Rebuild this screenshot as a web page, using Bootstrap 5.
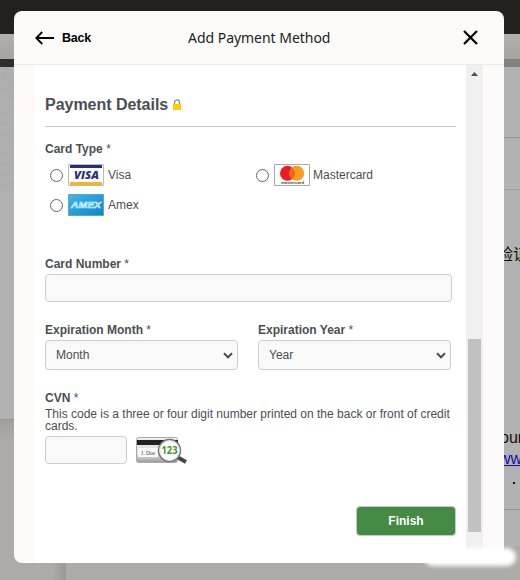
<!DOCTYPE html>
<html lang="en">
<head>
<meta charset="utf-8">
<meta name="viewport" content="width=device-width, initial-scale=1">
<title>Add Payment Method</title>
<link href="https://cdn.jsdelivr.net/npm/bootstrap@5.3.0/dist/css/bootstrap.min.css" rel="stylesheet">
<style>
body{width:520px;height:580px;overflow:hidden;background:#acaba9;font:12px/14px "Liberation Sans",Arial,sans-serif;color:#4a4f53}
.page-top{height:34px;background:#22211d}
.page-sub{height:25px;background:linear-gradient(#b1b0af,#a5a4a2)}
.page-strip{height:8px;background:linear-gradient(90deg,#302e2a 0 30px,#85807b 490px)}
.page-left{width:66px;height:513px;background:linear-gradient(90deg,#acaba9 52px,#9b9a98)}
.left-art{height:124px;width:14px;background:repeating-radial-gradient(circle at -12px 0,#afafaf 0 6px,#acacac 9px 10px)}
.left-card{height:229px;width:14px;background:#b1b1b1;border-bottom:1px solid #989796}
.left-shade{height:18px;width:14px;background:linear-gradient(#a09f9d,#acaba9)}
.page-right{width:16px;height:479px;background:#b2b2b2;overflow:hidden;color:#111;font:16px/21px "Liberation Sans","Noto Sans CJK SC",sans-serif;white-space:nowrap}
.r1{height:71px;border-bottom:1px solid #929292}
.r2{height:52px;border-bottom:1px solid #a0a0a0}
.r3{height:237px;padding-top:54px}
.r3 span{margin-left:-7px}
.r4{height:83px;border-bottom:1px solid #929292}
.r4 span{display:block;margin-left:-4px}
.r4 .site{color:#1a0dab;text-decoration:underline;margin-left:-5px}
.r4 .dot{margin:13px 0 0 9px;width:2px;height:2px;background:#111}
.pay-dialog{left:14px;top:11px;width:490px;height:552px;border-radius:8px;background:#fcfbf9;overflow:hidden}
.pay-head{height:54px;border-bottom:1px solid #ebeaea;padding:0 26px 0 21px;color:#000}
.back-text{font-weight:bold;font-size:12.5px;margin-left:7px;width:126px;letter-spacing:-.25px}
.head-title{font:14px/20px "Noto Sans",sans-serif;color:#222;width:144px;white-space:nowrap;letter-spacing:-.03px}
.pay-body{height:498px;padding:0 21px}
.pay-form{width:431px;background:#fff;padding:30px 10px 0}
.sec-title{font-size:16px;line-height:20px;font-weight:bold;height:32px;margin:0;border-bottom:1px solid #ccc;width:411px;color:#4a4f53;letter-spacing:-.03px}
.lab{font-weight:bold;height:14px;line-height:14px;display:block}
.lab i{font-weight:normal;font-style:normal}
.kind{width:206px;height:30px;padding-left:5px}
.kind input{width:13px;height:13px;margin:1px 5px 0 0;appearance:none;border:1px solid #666;border-radius:50%;background:#fff}
.kind svg{margin-right:4px;flex:none}
.kind input:checked{background:#666}
.form-control.fld,.form-select.sel{border:1px solid #ccc;border-radius:4px;background-color:#f9f9f9;font-size:12px;line-height:14px;color:#4a4f53}
.form-control.fld{height:28px;padding:4px 8px}
.form-select.sel{width:193px;height:30px;padding:0 25px 0 10px;background-image:url("data:image/svg+xml,%3Csvg xmlns='http://www.w3.org/2000/svg' viewBox='0 0 10 7'%3E%3Cpath d='M1 1.3 5 5.3 9 1.3' fill='none' stroke='%234a4f53' stroke-width='2'/%3E%3C/svg%3E");background-size:10px 7px;background-position:right 4px center}
.hint{line-height:12px;height:24px;margin:3px 0 4px;letter-spacing:-.002px;white-space:nowrap}
.btn.finish{width:100px;height:30px;padding:0;border:1px solid #c3cdc2;border-radius:4px;background:#458a45;color:#fff;font-size:12px;font-weight:bold}
.scroll-rail{width:17px;background:#f0f0f0;padding:7px 2px 0}
.up{width:7px;height:4px;margin-left:3px;display:block}
.thumb{width:13px;height:193px;margin-top:263px;background:#c1c1c1}
.smear{left:424px;top:548px;width:92px;height:18px;border-radius:9px;background:#fff;filter:blur(2px)}
</style>
</head>
<body class="position-relative">
<div class="page-top"></div>
<div class="page-sub"></div>
<div class="page-strip"></div>
<div class="d-flex justify-content-between">
  <div class="page-left"><div class="left-art"></div><div class="left-card"></div><div class="left-shade"></div></div>
  <div class="page-right">
    <div class="r1"></div><div class="r2"></div>
    <div class="r3"><span>验证</span></div>
    <div class="r4"><span>our</span><span class="site">www</span><span class="dot"></span></div>
  </div>
</div>

<main class="pay-dialog position-absolute">
  <header class="pay-head d-flex align-items-center">
    <svg width="20" height="14" viewBox="0 0 20 14" fill="none" stroke="#000" stroke-width="1.8"><path d="M19 7H1.5M7.2 1 1.3 7l5.9 6"/></svg>
    <span class="back-text">Back</span>
    <span class="head-title">Add Payment Method</span>
    <svg class="ms-auto" width="15" height="15" viewBox="0 0 15 15" stroke="#000" stroke-width="2.2"><path d="m1 1 13 13m0-13-13 13"/></svg>
  </header>
  <div class="pay-body d-flex">
    <form class="pay-form">
      <h1 class="sec-title d-flex">Payment Details<svg class="ms-1" width="10" height="12" viewBox="0 0 10 12" style="margin-top:4px"><path d="M2.5 6V3.4a2.5 2.5 0 0 1 5 0V6" fill="none" stroke="#8b8b8b" stroke-width="1.3"/><path fill="#fc0" d="M1 5h8v6H1z"/></svg></h1>
      <div class="lab" style="margin-top:15px">Card Type <i>*</i></div>
      <div class="d-flex flex-wrap" style="padding-top:4px">
        <label class="kind d-flex align-items-center">
          <input type="radio" name="kind">
          <svg width="36" height="22" viewBox="0 0 36 22"><path fill="#fff" stroke="#bbb" d="M.5.5h35v21H.5z"/><path fill="#29307a" d="M2 1h32v3H2z"/><path fill="#f6b420" d="M2 18h32v3H2z"/><text x="6" y="15" font-family="Open Sans,sans-serif" font-size="11" font-weight="800" font-style="italic" fill="#29307a" textLength="25" lengthAdjust="spacingAndGlyphs">VISA</text></svg>
          <span>Visa</span>
        </label>
        <label class="kind d-flex align-items-center" style="width:190px">
          <input type="radio" name="kind">
          <svg width="36" height="22" viewBox="0 0 36 22" style="margin-right:3px"><path fill="#fff" stroke="#aaa" d="M.5.5h35v21H.5z"/><circle cx="13.5" cy="9.3" r="7.5" fill="#eb1c26"/><circle cx="22.7" cy="9.3" r="7.5" fill="#f79e1f"/><path fill="#f2641f" d="M18.1 3.4a7.5 7.5 0 0 1 0 11.8 7.5 7.5 0 0 1 0-11.8"/><text x="7" y="20.3" font-family="Liberation Sans,sans-serif" font-size="4.2" font-weight="bold" fill="#444" textLength="23">mastercard</text></svg>
          <span>Mastercard</span>
        </label>
        <label class="kind d-flex align-items-center">
          <input type="radio" name="kind">
          <svg width="36" height="22" viewBox="0 0 36 22"><defs><linearGradient id="sky" x2="1" y2="1"><stop stop-color="#41b7e6"/><stop offset="1" stop-color="#0787cb"/></linearGradient></defs><path fill="url(#sky)" stroke="#6aa3bd" d="M.5.5h35v21H.5z"/><text x="3" y="14.3" font-family="Liberation Sans,sans-serif" font-size="9.5" font-weight="bold" font-style="italic" fill="#6fc6ec" stroke="#d9f3ff" stroke-width=".6" textLength="30" lengthAdjust="spacingAndGlyphs">AMEX</text></svg>
          <span>Amex</span>
        </label>
      </div>
      <label class="lab" for="num" style="margin-top:37px;margin-bottom:3px">Card Number <i>*</i></label>
      <input class="form-control fld" id="num" style="width:407px">
      <div class="d-flex" style="gap:20px;margin-top:21px">
        <div><label class="lab" for="mon" style="margin-bottom:3px">Expiration Month <i>*</i></label><select class="form-select sel" id="mon"><option>Month</option></select></div>
        <div><label class="lab" for="yr" style="margin-bottom:3px">Expiration Year <i>*</i></label><select class="form-select sel" id="yr"><option>Year</option></select></div>
      </div>
      <label class="lab" for="cvn" style="margin-top:21px">CVN <i>*</i></label>
      <p class="hint">This code is a three or four digit number printed on the back or front of credit<br>cards.</p>
      <div class="d-flex">
        <input class="form-control fld" id="cvn" style="width:82px">
        <svg width="52" height="30" viewBox="0 0 52 30" style="margin-left:9px"><defs><linearGradient id="silver" x2="0" y2="1"><stop stop-color="#eee"/><stop offset=".7" stop-color="#ddd"/><stop offset="1" stop-color="#999"/></linearGradient></defs><rect x=".5" y="1.5" width="41" height="25" rx="2" fill="url(#silver)" stroke="#aaa"/><path fill="#222" d="M1 4h41v5H1z"/><path fill="#f8f8f8" d="M2 12h20v9H2z"/><text x="5" y="18.5" font-family="Liberation Serif,serif" font-size="5.5" fill="#444">J. Doe</text><path d="m42 21.5 8 4.5" stroke="#444" stroke-width="3.8"/><circle cx="33.5" cy="14.5" r="11" fill="#fff" stroke="#777" stroke-width="1.5"/><circle cx="33.5" cy="14.5" r="9.8" fill="none" stroke="#ddd"/><text x="25.5" y="18.2" font-family="Open Sans,sans-serif" font-size="10" font-weight="bold" fill="#38942f" textLength="16" lengthAdjust="spacingAndGlyphs">123</text></svg>
      </div>
      <div class="d-flex justify-content-end" style="margin-top:40px"><button type="button" class="btn finish">Finish</button></div>
    </form>
    <div class="scroll-rail"><svg class="up" viewBox="0 0 7 4"><path fill="#505050" d="M3.5 0 7 4H0z"/></svg><div class="thumb"></div></div>
  </div>
</main>
<div class="smear position-absolute"></div>
<script src="https://cdn.jsdelivr.net/npm/bootstrap@5.3.0/dist/js/bootstrap.bundle.min.js"></script>
</body>
</html>
